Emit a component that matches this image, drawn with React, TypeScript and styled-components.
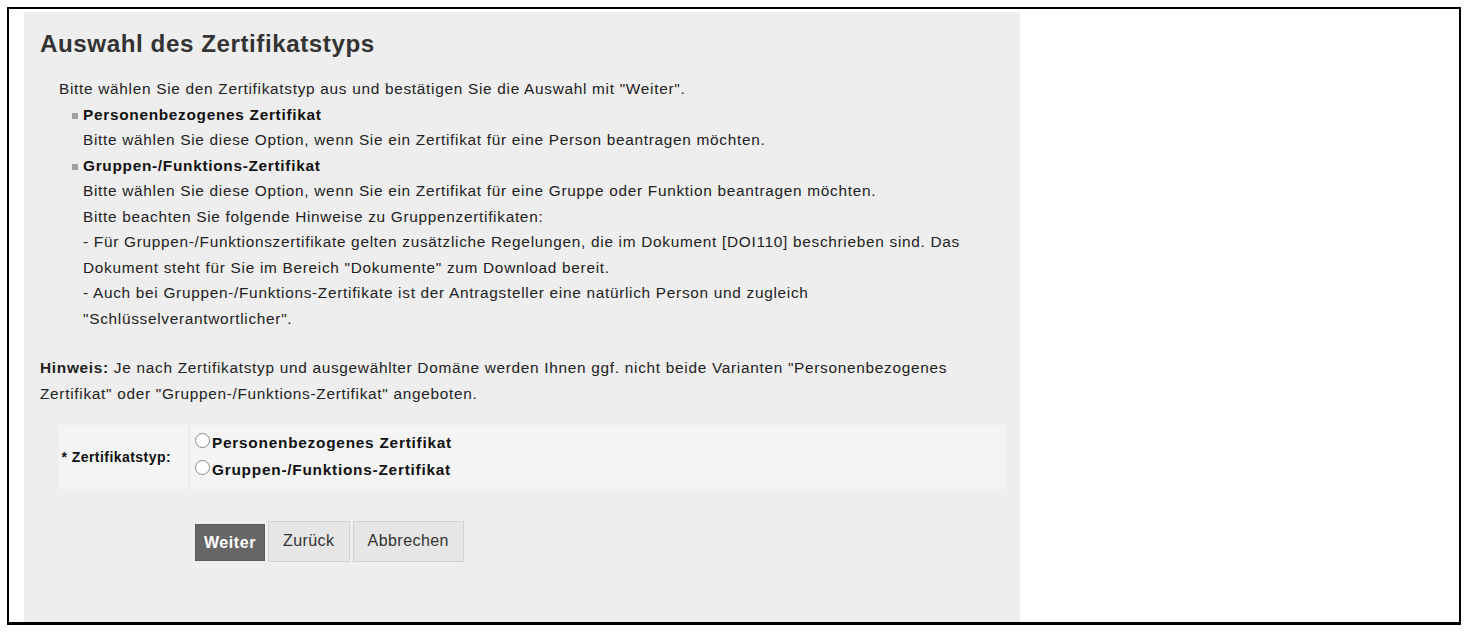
import React from "react";
import styled, { createGlobalStyle } from "styled-components";

const Global = createGlobalStyle`
  html, body { margin: 0; padding: 0; background: #fff; }
  body { font-family: "Liberation Sans", Arial, sans-serif; color: #333; }
`;

const Frame = styled.div`
  margin: 7px;
  height: 618px;
  border: 2px solid #000;
  border-bottom-width: 3px;
  box-sizing: border-box;
  padding: 3px 0 0 15px;
  overflow: hidden;
`;

const Panel = styled.div`
  width: 996px;
  height: 610px;
  background: #eeeeee;
  padding: 17px 16px 0 16px;
  box-sizing: border-box;
`;

const Title = styled.h2`
  margin: 0 0 17px 0;
  font-size: 24.2px;
  letter-spacing: 0.55px;
  font-weight: bold;
  line-height: 30px;
  color: #333;
`;

const Intro = styled.div`
  padding-left: 19px;
  font-size: 15.4px;
  letter-spacing: 0.7px;
  line-height: 25.5px;
  color: #222;
`;

const List = styled.ul`
  list-style: none;
  margin: 0;
  padding: 0 0 0 24px;
`;

const Item = styled.li`
  position: relative;
  &::before {
    content: "";
    position: absolute;
    left: -11px;
    top: 11px;
    width: 6px;
    height: 6px;
    background: #a0a0a0;
  }
`;

const ItemTitle = styled.div`
  font-weight: bold;
  color: #111;
`;

const Note = styled.p`
  margin: 24px 0 0 0;
  font-size: 15.4px;
  letter-spacing: 0.7px;
  line-height: 26px;
  color: #222;
`;

const FormRow = styled.div`
  display: flex;
  margin: 18px 0 0 19px;
  width: 947px;
  height: 64px;
  background: #f4f4f4;
`;

const LabelCell = styled.div`
  width: 131px;
  display: flex;
  align-items: center;
  justify-content: flex-end;
  padding-right: 17px;
  box-sizing: border-box;
  font-size: 14px;
  letter-spacing: 0.45px;
  font-weight: bold;
  color: #111;
  border-right: 2px solid #ececec;
`;

const ValueCell = styled.div`
  flex: 1;
  display: flex;
  flex-direction: column;
  justify-content: flex-start;
  padding: 4px 0 0 4px;
`;

const RadioLine = styled.label`
  display: flex;
  align-items: center;
  height: 27px;
  font-size: 15.4px;
  letter-spacing: 0.75px;
  font-weight: bold;
  color: #111;
`;

const Radio = styled.span`
  display: inline-block;
  flex: none;
  width: 15px;
  height: 15px;
  border: 1px solid #8a8a8a;
  border-radius: 50%;
  background: #fff;
  box-sizing: border-box;
  margin: 0 2px 5px 1px;
`;

const Buttons = styled.div`
  display: flex;
  margin: 32px 0 0 155px;
  align-items: flex-start;
`;

const Button = styled.button<{ $primary?: boolean }>`
  font-family: "Liberation Sans", Arial, sans-serif;
  font-size: 16px;
  letter-spacing: ${(p) => (p.$primary ? "0.55px" : "0.45px")};
  height: ${(p) => (p.$primary ? "37px" : "41px")};
  margin-top: ${(p) => (p.$primary ? "3px" : "0")};
  margin-right: 3px;
  padding: 0 ${(p) => (p.$primary ? "8px" : "14px")};
  padding-bottom: ${(p) => (p.$primary ? "0" : "1px")};
  background: ${(p) => (p.$primary ? "#666666" : "#e6e6e6")};
  color: ${(p) => (p.$primary ? "#fff" : "#333")};
  font-weight: ${(p) => (p.$primary ? "bold" : "normal")};
  border: 1px solid ${(p) => (p.$primary ? "#5a5a5a" : "#d2d2d2")};
  border-radius: 0;
  cursor: pointer;
`;

export default function App() {
  return (
    <>
      <Global />
      <Frame>
        <Panel>
          <Title>Auswahl des Zertifikatstyps</Title>
          <Intro>
            Bitte wählen Sie den Zertifikatstyp aus und bestätigen Sie die Auswahl mit "Weiter".
            <List>
              <Item>
                <ItemTitle>Personenbezogenes Zertifikat</ItemTitle>
                Bitte wählen Sie diese Option, wenn Sie ein Zertifikat für eine Person beantragen möchten.
              </Item>
              <Item>
                <ItemTitle>Gruppen-/Funktions-Zertifikat</ItemTitle>
                Bitte wählen Sie diese Option, wenn Sie ein Zertifikat für eine Gruppe oder Funktion beantragen möchten.
                <br />
                Bitte beachten Sie folgende Hinweise zu Gruppenzertifikaten:
                <br />
                - Für Gruppen-/Funktionszertifikate gelten zusätzliche Regelungen, die im Dokument [DOI110] beschrieben sind. Das
                <br />
                Dokument steht für Sie im Bereich "Dokumente" zum Download bereit.
                <br />
                - Auch bei Gruppen-/Funktions-Zertifikate ist der Antragsteller eine natürlich Person und zugleich
                <br />
                "Schlüsselverantwortlicher".
              </Item>
            </List>
          </Intro>
          <Note>
            <b>Hinweis:</b> Je nach Zertifikatstyp und ausgewählter Domäne werden Ihnen ggf. nicht beide Varianten "Personenbezogenes
            <br />
            Zertifikat" oder "Gruppen-/Funktions-Zertifikat" angeboten.
          </Note>
          <FormRow>
            <LabelCell>* Zertifikatstyp:</LabelCell>
            <ValueCell>
              <RadioLine>
                <Radio />
                Personenbezogenes Zertifikat
              </RadioLine>
              <RadioLine>
                <Radio />
                Gruppen-/Funktions-Zertifikat
              </RadioLine>
            </ValueCell>
          </FormRow>
          <Buttons>
            <Button $primary>Weiter</Button>
            <Button>Zurück</Button>
            <Button>Abbrechen</Button>
          </Buttons>
        </Panel>
      </Frame>
    </>
  );
}
